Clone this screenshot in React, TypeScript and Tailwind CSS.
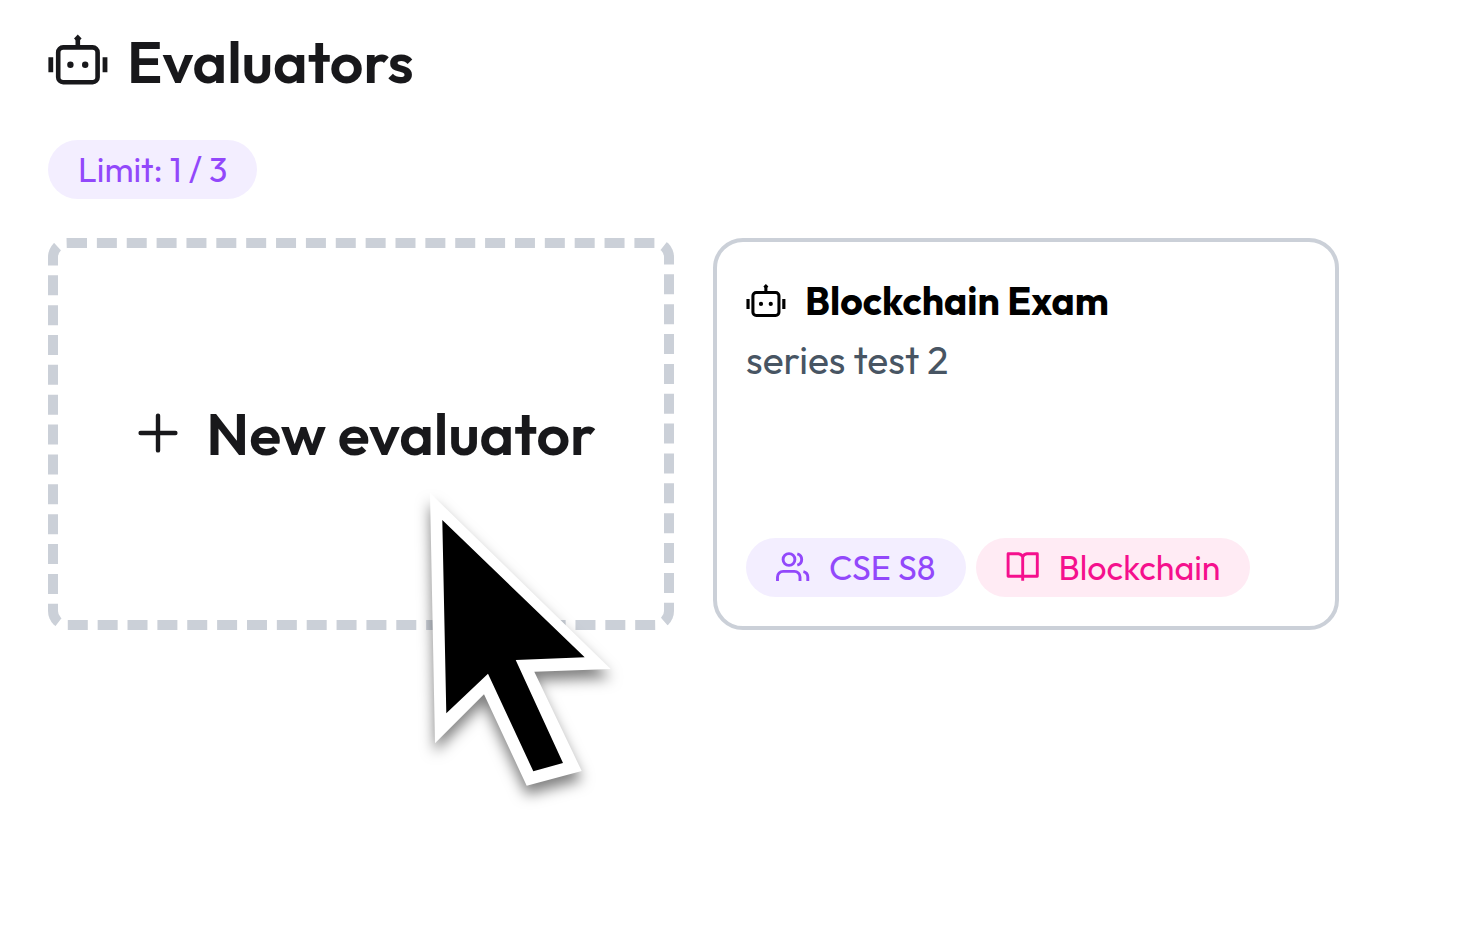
import type { ReactNode } from "react";

function RobotIcon({ className }: { className: string }) {
  return (
    <svg viewBox="0 -1 60 56" fill="none" stroke="currentColor" className={className} aria-hidden="true">
      <rect x="10.2" y="13.4" width="39.4" height="34.8" rx="5" strokeWidth="4.6" />
      <path d="M29.8 4v8" strokeWidth="4.6" />
      <path d="M2.8 23.3v15M57 23.3v15" strokeWidth="4.8" />
      <path d="M29.8 .6l3.8 3.8-3.8 3.8-3.8-3.8z" fill="currentColor" stroke="none" />
      <g fill="currentColor" stroke="none">
        <circle cx="22.4" cy="30.7" r="3.2" />
        <circle cx="37.2" cy="30.7" r="3.2" />
      </g>
    </svg>
  );
}

function PlusIcon() {
  return (
    <svg viewBox="0 0 40 40" fill="none" stroke="currentColor" strokeWidth="4.4" strokeLinecap="round" className="size-10 shrink-0" aria-hidden="true">
      <path d="M20 2.6v34.8M2.6 20h34.8" />
    </svg>
  );
}

function UsersIcon() {
  return (
    <svg viewBox="0 0 34 34" fill="none" stroke="currentColor" strokeWidth="2.9" className="size-[34px] shrink-0" aria-hidden="true">
      <circle cx="13" cy="8.5" r="5.9" />
      <path d="M1.5 30v-4a5.6 5.6 0 0 1 5.6-5.6h11.3a5.6 5.6 0 0 1 5.6 5.6v4" />
      <path d="M21.3 2.8a5.9 5.9 0 0 1 0 11.4" />
      <path d="M27.4 20.6a5.7 5.7 0 0 1 4.4 5.4v4" />
    </svg>
  );
}

function BookIcon() {
  return (
    <svg viewBox="0 0 34 34" fill="none" stroke="currentColor" strokeWidth="2.9" strokeLinejoin="round" className="size-[34px] shrink-0" aria-hidden="true">
      <path d="M16.7 29.8V6a5 5 0 0 0-4.2-3.2H2.1v22.5h29.2V2.8H20.9A5 5 0 0 0 16.7 6" />
    </svg>
  );
}

function Cursor() {
  return (
    <svg
      viewBox="0 0 182 294"
      className="pointer-events-none absolute left-[372px] top-[245px] h-[294px] w-[182px] overflow-visible drop-shadow-[0_9px_7px_rgba(0,0,0,0.5)]"
      aria-hidden="true"
    >
      <path d="M0 0L180.7 176 104.3 178.7 151.7 278 96.7 292.7 54 201.3 5 250.3z" fill="#fff" />
      <path d="M12.3 27L154.7 164.3 85.7 167 133 270 103.3 278.3 58 180.7 16.3 220.3z" fill="#000" />
    </svg>
  );
}

function Pill({ tone, icon, children }: { tone: "violet" | "pink"; icon?: ReactNode; children: ReactNode }) {
  const colors = tone === "violet" ? "bg-[#f3eeff] text-[#9248fb]" : "bg-[#ffebf4] text-[#f5108d]";
  return (
    <span className={`inline-flex h-[59px] items-center gap-[19px] whitespace-nowrap rounded-full px-[30px] text-[34px] ${colors}`}>
      {icon}
      <span>{children}</span>
    </span>
  );
}

export default function App() {
  return (
    <main className="min-h-screen bg-white pb-12 pl-12 pr-[129px] pt-8 font-['Outfit','Lato',sans-serif] text-[#18181b]">
      <h1 className="flex h-[58px] items-center gap-[19px] text-[59px] font-semibold">
        <RobotIcon className="h-14 w-[60px] shrink-0" />
        Evaluators
      </h1>
      <div className="mt-[50px] flex">
        <Pill tone="violet">Limit: 1 / 3</Pill>
      </div>
      <div className="mt-[39px] grid grid-cols-2 gap-[39px]">
        <button
          type="button"
          className="relative flex min-h-[392px] items-center justify-center gap-7 whitespace-nowrap rounded-[19px] border-[10px] border-dashed border-[#cbd0d8] pb-[2px] pl-3 text-[59px] font-semibold"
        >
          <PlusIcon />
          <span>New evaluator</span>
          <Cursor />
        </button>
        <article className="flex min-h-[392px] flex-col rounded-[30px] border-4 border-[#cbd0d8] p-[29px]">
          <h2 className="flex h-[60px] items-center gap-[19px] text-[39px] font-bold text-black">
            <RobotIcon className="h-[37px] w-10 shrink-0" />
            Blockchain Exam
          </h2>
          <p className="text-[39px] leading-[58px] text-[#485563]">series test 2</p>
          <div className="mt-auto flex gap-[10px]">
            <Pill tone="violet" icon={<UsersIcon />}>CSE S8</Pill>
            <Pill tone="pink" icon={<BookIcon />}>Blockchain</Pill>
          </div>
        </article>
      </div>
    </main>
  );
}
